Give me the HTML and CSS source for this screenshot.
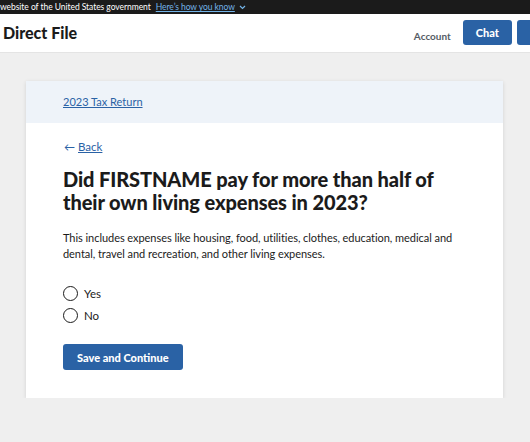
FILE: index.html
```html
<!DOCTYPE html>
<html lang="en">
<head>
  <meta charset="UTF-8">
  <meta name="viewport" content="width=device-width, initial-scale=1.0">
  <title>Direct File</title>
  <link rel="stylesheet" href="styles.css">
</head>
<body>
  <div class="gov-banner">
    <span class="gov-text">website of the United States government</span>
    <a href="#" class="gov-link">Here’s how you know</a>
    <svg class="gov-chevron" width="7" height="5" viewBox="0 0 7 5"><path d="M1 1l2.5 2.5L6 1" fill="none" stroke="#73b3e7" stroke-width="1.2"/></svg>
  </div>

  <header class="site-header">
    <div class="site-title">Direct File</div>
    <nav class="site-nav">
      <a href="#" class="nav-link">Account</a>
      <button type="button" class="nav-button">Chat</button>
      <button type="button" class="nav-button nav-button-edge" aria-label="Sign out"></button>
    </nav>
  </header>

  <main class="main">
    <div class="card">
      <div class="card-header">
        <a href="#" class="crumb">2023 Tax Return</a>
      </div>
      <div class="card-body">
        <a href="#" class="back"><span class="back-arrow">&larr;</span><span class="back-text">Back</span></a>
        <h1>Did FIRSTNAME pay for more than half of their own living expenses in 2023?</h1>
        <p class="hint">This includes expenses like housing, food, utilities, clothes, education, medical and dental, travel and recreation, and other living expenses.</p>

        <form class="options">
          <label class="radio"><input type="radio" name="support"><span class="radio-dot"></span>Yes</label>
          <label class="radio"><input type="radio" name="support"><span class="radio-dot"></span>No</label>
          <button type="button" class="primary">Save and Continue</button>
        </form>
      </div>
    </div>
  </main>
</body>
</html>
```

FILE: styles.css
```css
body {
  margin: 0;
  padding: 0;
  background-color: #efefef;
  color: #1b1b1b;
  font-family: Lato, "Liberation Sans", sans-serif;
  overflow: hidden;
}
.gov-banner {
  height: 14px;
  background-color: #1b1b1b;
  color: #fff;
  font-size: 8.5px;
  letter-spacing: -0.05px;
  display: flex;
  align-items: center;
  white-space: nowrap;
}
.gov-link {
  color: #73b3e7;
  margin-left: 5px;
}
.gov-chevron {
  margin-left: 4px;
}
.site-header {
  height: 38px;
  background-color: #fff;
  border-bottom: 1px solid #e4e4e4;
  display: flex;
  align-items: center;
  justify-content: space-between;
  padding-left: 3px;
}
.site-title {
  font-size: 16px;
  font-weight: 900;
  margin-top: -2px;
}
.site-nav {
  display: flex;
  align-items: center;
}
.nav-link {
  color: #565c65;
  font-size: 10px;
  font-weight: 700;
  text-decoration: none;
  margin-right: 12px;
  margin-top: 5px;
}
.nav-button {
  height: 25px;
  padding: 0 13px;
  margin-right: 5px;
  margin-top: -1px;
  background-color: #2a62a5;
  color: #fff;
  border: none;
  border-radius: 3px;
  font-family: inherit;
  font-size: 11px;
  font-weight: 900;
}
.nav-button-edge {
  width: 13px;
  padding: 0;
  margin-right: 0;
  border-radius: 3px 0 0 3px;
}
.main {
  padding: 28px 0 0 26px;
}
.card {
  width: 477px;
  background-color: #fff;
  box-shadow: 0 1px 4px rgba(0, 0, 0, 0.12);
  padding-bottom: 28px;
}
.card-header {
  height: 42px;
  background-color: #eef3f9;
  display: flex;
  align-items: center;
  padding-left: 37px;
}
.crumb {
  color: #2a62a5;
  font-size: 11px;
  margin-top: -1px;
}
.card-body {
  padding: 12px 37px 0;
}
.back {
  display: inline-flex;
  align-items: center;
  color: #2a62a5;
  font-size: 11.5px;
  text-decoration: none;
}
.back-text {
  text-decoration: underline;
}
.back-arrow {
  margin-left: 1px;
  margin-right: 3px;
  font-size: 11px;
}
h1 {
  font-size: 20px;
  font-weight: 900;
  line-height: 22.5px;
  letter-spacing: -0.1px;
  margin: 14px 0 0;
}
.hint {
  font-size: 11px;
  line-height: 16px;
  letter-spacing: -0.05px;
  margin: 17px 0 0;
  color: #1b1b1b;
}
.options {
  margin-top: 23px;
}
.radio {
  display: flex;
  align-items: center;
  font-size: 11.5px;
  height: 16px;
  margin-bottom: 6px;
}
.radio input {
  display: none;
}
.radio-dot {
  width: 13px;
  height: 13px;
  border: 1.5px solid #1b1b1b;
  border-radius: 50%;
  margin-right: 6px;
}
.primary {
  margin-top: 15px;
  height: 26px;
  padding: 0 14px;
  background-color: #2a62a5;
  color: #fff;
  border: none;
  border-radius: 3px;
  font-family: inherit;
  font-size: 11px;
  font-weight: 900;
}
```
